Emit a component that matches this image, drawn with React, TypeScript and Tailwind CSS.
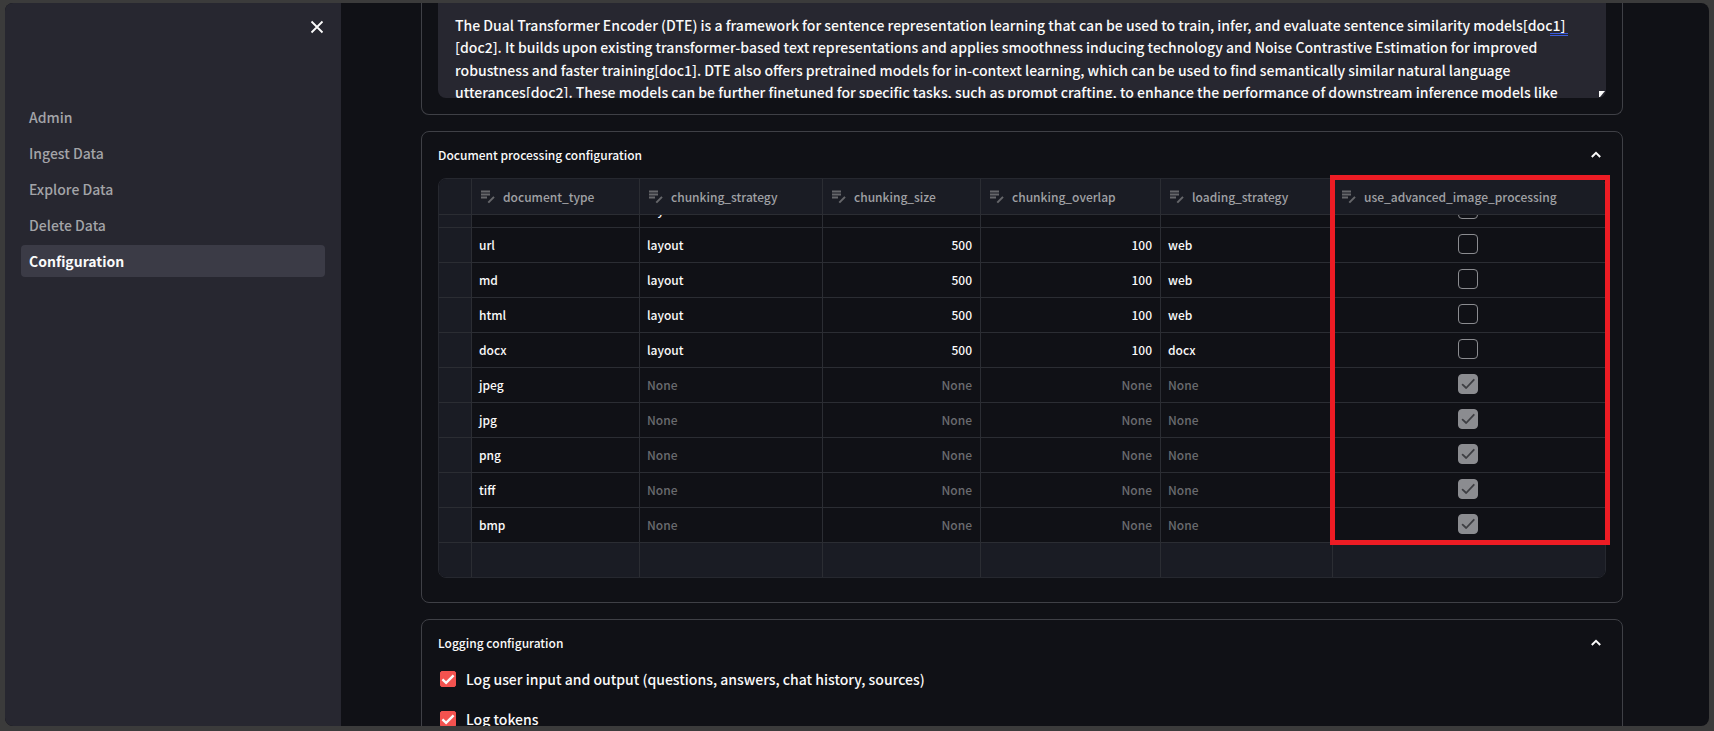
import React, { useLayoutEffect, useRef } from "react";

const PROMPT = `The Dual Transformer Encoder (DTE) is a framework for sentence representation learning that can be used to train, infer, and evaluate sentence similarity models[doc1]
[doc2]. It builds upon existing transformer-based text representations and applies smoothness inducing technology and Noise Contrastive Estimation for improved
robustness and faster training[doc1]. DTE also offers pretrained models for in-context learning, which can be used to find semantically similar natural language
utterances[doc2]. These models can be further finetuned for specific tasks, such as prompt crafting, to enhance the performance of downstream inference models like`;

const NAV = ["Admin", "Ingest Data", "Explore Data", "Delete Data", "Configuration"];

const COLUMNS = [
  { name: "document_type", width: "w-[168px]" },
  { name: "chunking_strategy", width: "w-[183px]" },
  { name: "chunking_size", width: "w-[158px]" },
  { name: "chunking_overlap", width: "w-[180px]" },
  { name: "loading_strategy", width: "w-[172px]" },
  { name: "use_advanced_image_processing", width: "" },
];

type Row = {
  type: string;
  strategy?: string;
  size?: number;
  overlap?: number;
  loading?: string;
  advanced: boolean;
};

const ROWS: Row[] = [
  { type: "txt", strategy: "layout", size: 500, overlap: 100, loading: "web", advanced: false },
  { type: "url", strategy: "layout", size: 500, overlap: 100, loading: "web", advanced: false },
  { type: "md", strategy: "layout", size: 500, overlap: 100, loading: "web", advanced: false },
  { type: "html", strategy: "layout", size: 500, overlap: 100, loading: "web", advanced: false },
  { type: "docx", strategy: "layout", size: 500, overlap: 100, loading: "docx", advanced: false },
  { type: "jpeg", advanced: true },
  { type: "jpg", advanced: true },
  { type: "png", advanced: true },
  { type: "tiff", advanced: true },
  { type: "bmp", advanced: true },
];

function Chevron() {
  return (
    <svg className="size-4" viewBox="0 0 16 16" fill="none" stroke="currentColor" strokeWidth="2">
      <path d="M3.8 10 8 5.8l4.2 4.2" />
    </svg>
  );
}

function EditableIcon() {
  return (
    <svg className="size-4 shrink-0" viewBox="0 0 16 16" fill="none" stroke="#66676b">
      <path d="M1 2.5h9M1 5.5h9M1 8.5h6" strokeWidth="2" />
      <path d="M8.3 13.6 14 7.9" strokeWidth="2" />
    </svg>
  );
}

function Card({ title, children }: { title: string; children: React.ReactNode }) {
  return (
    <section className="rounded-lg border border-[#3f4046] px-4 pb-6">
      <h2>
        <button
          type="button"
          className="flex h-[46px] w-full items-center justify-between pr-[2px] text-[12px] leading-5 font-medium"
        >
          <span>{title}</span>
          <Chevron />
        </button>
      </h2>
      {children}
    </section>
  );
}

function Value({ value }: { value?: string | number }) {
  return value === undefined ? <span className="text-[#6a6b6f]">None</span> : <>{value}</>;
}

function GridCheck({ label, checked }: { label: string; checked: boolean }) {
  return (
    <span className="relative mx-auto block size-5">
      <input
        type="checkbox"
        defaultChecked={checked}
        aria-label={label}
        className="peer block size-5 appearance-none rounded border border-[#8b8c90] checked:bg-[#8b8c90]"
      />
      <svg
        className="pointer-events-none absolute inset-0 hidden size-5 peer-checked:block"
        viewBox="0 0 20 20"
        fill="none"
        stroke="#3d3e42"
        strokeWidth="1.8"
        strokeLinecap="round"
        strokeLinejoin="round"
      >
        <path d="M4.6 10.6 8.2 14 15.8 5.8" />
      </svg>
    </span>
  );
}

function DocumentGrid() {
  const scroller = useRef<HTMLDivElement>(null);
  useLayoutEffect(() => {
    if (scroller.current) scroller.current.scrollTop = 22;
  }, []);

  const cell = "h-[35px] border-r border-b border-[#2b2d33] pr-2 pl-[7px] whitespace-nowrap";

  return (
    <div className="relative">
      <div ref={scroller} className="h-[400px] overflow-hidden rounded-lg border border-[#26282f]">
        <table className="w-full table-fixed border-separate border-spacing-0 text-[12px] leading-5 font-medium">
          <thead className="sticky top-0 z-10 bg-[#1a1c24] text-[#a0a1a5]">
            <tr>
              <td className="h-9 w-[33px] border-r border-b border-[#2b2d33]" />
              {COLUMNS.map((column) => (
                <th
                  key={column.name}
                  scope="col"
                  className={`h-9 border-r border-b border-[#2b2d33] px-2 text-left font-medium last:border-r-0 ${column.width}`}
                >
                  <span className="flex items-center gap-[7px]">
                    <EditableIcon />
                    {column.name}
                  </span>
                </th>
              ))}
            </tr>
          </thead>
          <tbody>
            {ROWS.map((row) => (
              <tr key={row.type}>
                <td className={`${cell} bg-[#1a1c24]`} />
                <td className={cell}>{row.type}</td>
                <td className={cell}>
                  <Value value={row.strategy} />
                </td>
                <td className={`${cell} text-right`}>
                  <Value value={row.size} />
                </td>
                <td className={`${cell} text-right`}>
                  <Value value={row.overlap} />
                </td>
                <td className={cell}>
                  <Value value={row.loading} />
                </td>
                <td className="h-[35px] border-b border-[#2b2d33] pr-[2px] pb-[2px]">
                  <GridCheck label={`Advanced image processing for ${row.type}`} checked={row.advanced} />
                </td>
              </tr>
            ))}
            <tr className="bg-[#1a1c24]">
              {["row", ...COLUMNS.map((column) => column.name)].map((name) => (
                <td key={name} className="h-[35px] border-r border-[#2b2d33] last:border-r-0" />
              ))}
            </tr>
          </tbody>
        </table>
      </div>
      <div className="pointer-events-none absolute -top-[3px] -right-1 z-20 h-[370px] w-[280px] border-[5px] border-[#ed1c24]" />
    </div>
  );
}

function LogOption({ label }: { label: string }) {
  return (
    <label className="flex h-6 items-center gap-[10px] text-[14px] leading-6 font-medium">
      <span className="relative block size-4">
        <input
          type="checkbox"
          defaultChecked
          className="peer block size-4 appearance-none rounded-[2px] border border-[#55565d] checked:border-[#f3524f] checked:bg-[#f3524f]"
        />
        <svg
          className="pointer-events-none absolute inset-0 hidden size-4 peer-checked:block"
          viewBox="0 0 16 16"
          fill="none"
          stroke="#fafafa"
          strokeWidth="2.4"
        >
          <path d="M2.4 8.4 6.1 11.8 13.6 4.4" />
        </svg>
      </span>
      {label}
    </label>
  );
}

export default function App() {
  return (
    <div className="h-screen bg-[#3b3b3b] px-[5px] pt-[3px] pb-[5px] font-['Noto_Sans_CJK_SC',sans-serif] text-[#fafafa]">
      <div className="flex h-full overflow-hidden rounded-lg bg-[#101116]">
        <aside className="w-[336px] shrink-0 bg-[#272730]">
          <div className="flex h-[98px] justify-end pt-4 pr-4">
            <button type="button" aria-label="Close sidebar" className="size-4">
              <svg viewBox="0 0 16 16" fill="none" stroke="currentColor" strokeWidth="1.8">
                <path d="m2.5 2.5 11 11M13.5 2.5l-11 11" />
              </svg>
            </button>
          </div>
          <nav className="flex flex-col gap-1 px-4">
            {NAV.map((item) => (
              <a
                key={item}
                href={`#${item}`}
                className={
                  item === "Configuration"
                    ? "block h-8 rounded bg-[#3b3b46] px-2 text-[14px] leading-8 font-bold"
                    : "block h-8 rounded px-2 text-[14px] leading-8 font-medium text-[#a3a4a8]"
                }
              >
                {item}
              </a>
            ))}
          </nav>
        </aside>

        <main className="flex min-w-0 flex-1 flex-col gap-4 overflow-hidden pr-[86px] pl-20">
          <section className="rounded-b-lg border border-t-0 border-[#3f4046] px-4 pb-4">
            <div className="relative">
              <textarea
                aria-label="Prompt"
                spellCheck={false}
                defaultValue={PROMPT}
                className="block h-[95px] w-full resize-none overflow-hidden rounded-b-lg bg-[#272730] px-[17px] pt-[11px] text-[14px] leading-[1.6] font-medium whitespace-pre"
              />
              <span className="absolute top-[30px] left-[1112px] h-[3px] w-[18px] border-y border-[#3b5bdb]" />
              <svg className="absolute right-0 bottom-0 size-2" viewBox="0 0 8 8" fill="#fafafa">
                <path d="M1 1h6L2 7H1z" />
              </svg>
            </div>
          </section>

          <Card title="Document processing configuration">
            <DocumentGrid />
          </Card>

          <Card title="Logging configuration">
            <div className="flex flex-col gap-4 pt-px pl-[2px]">
              <LogOption label="Log user input and output (questions, answers, chat history, sources)" />
              <LogOption label="Log tokens" />
            </div>
          </Card>
        </main>
      </div>
    </div>
  );
}
